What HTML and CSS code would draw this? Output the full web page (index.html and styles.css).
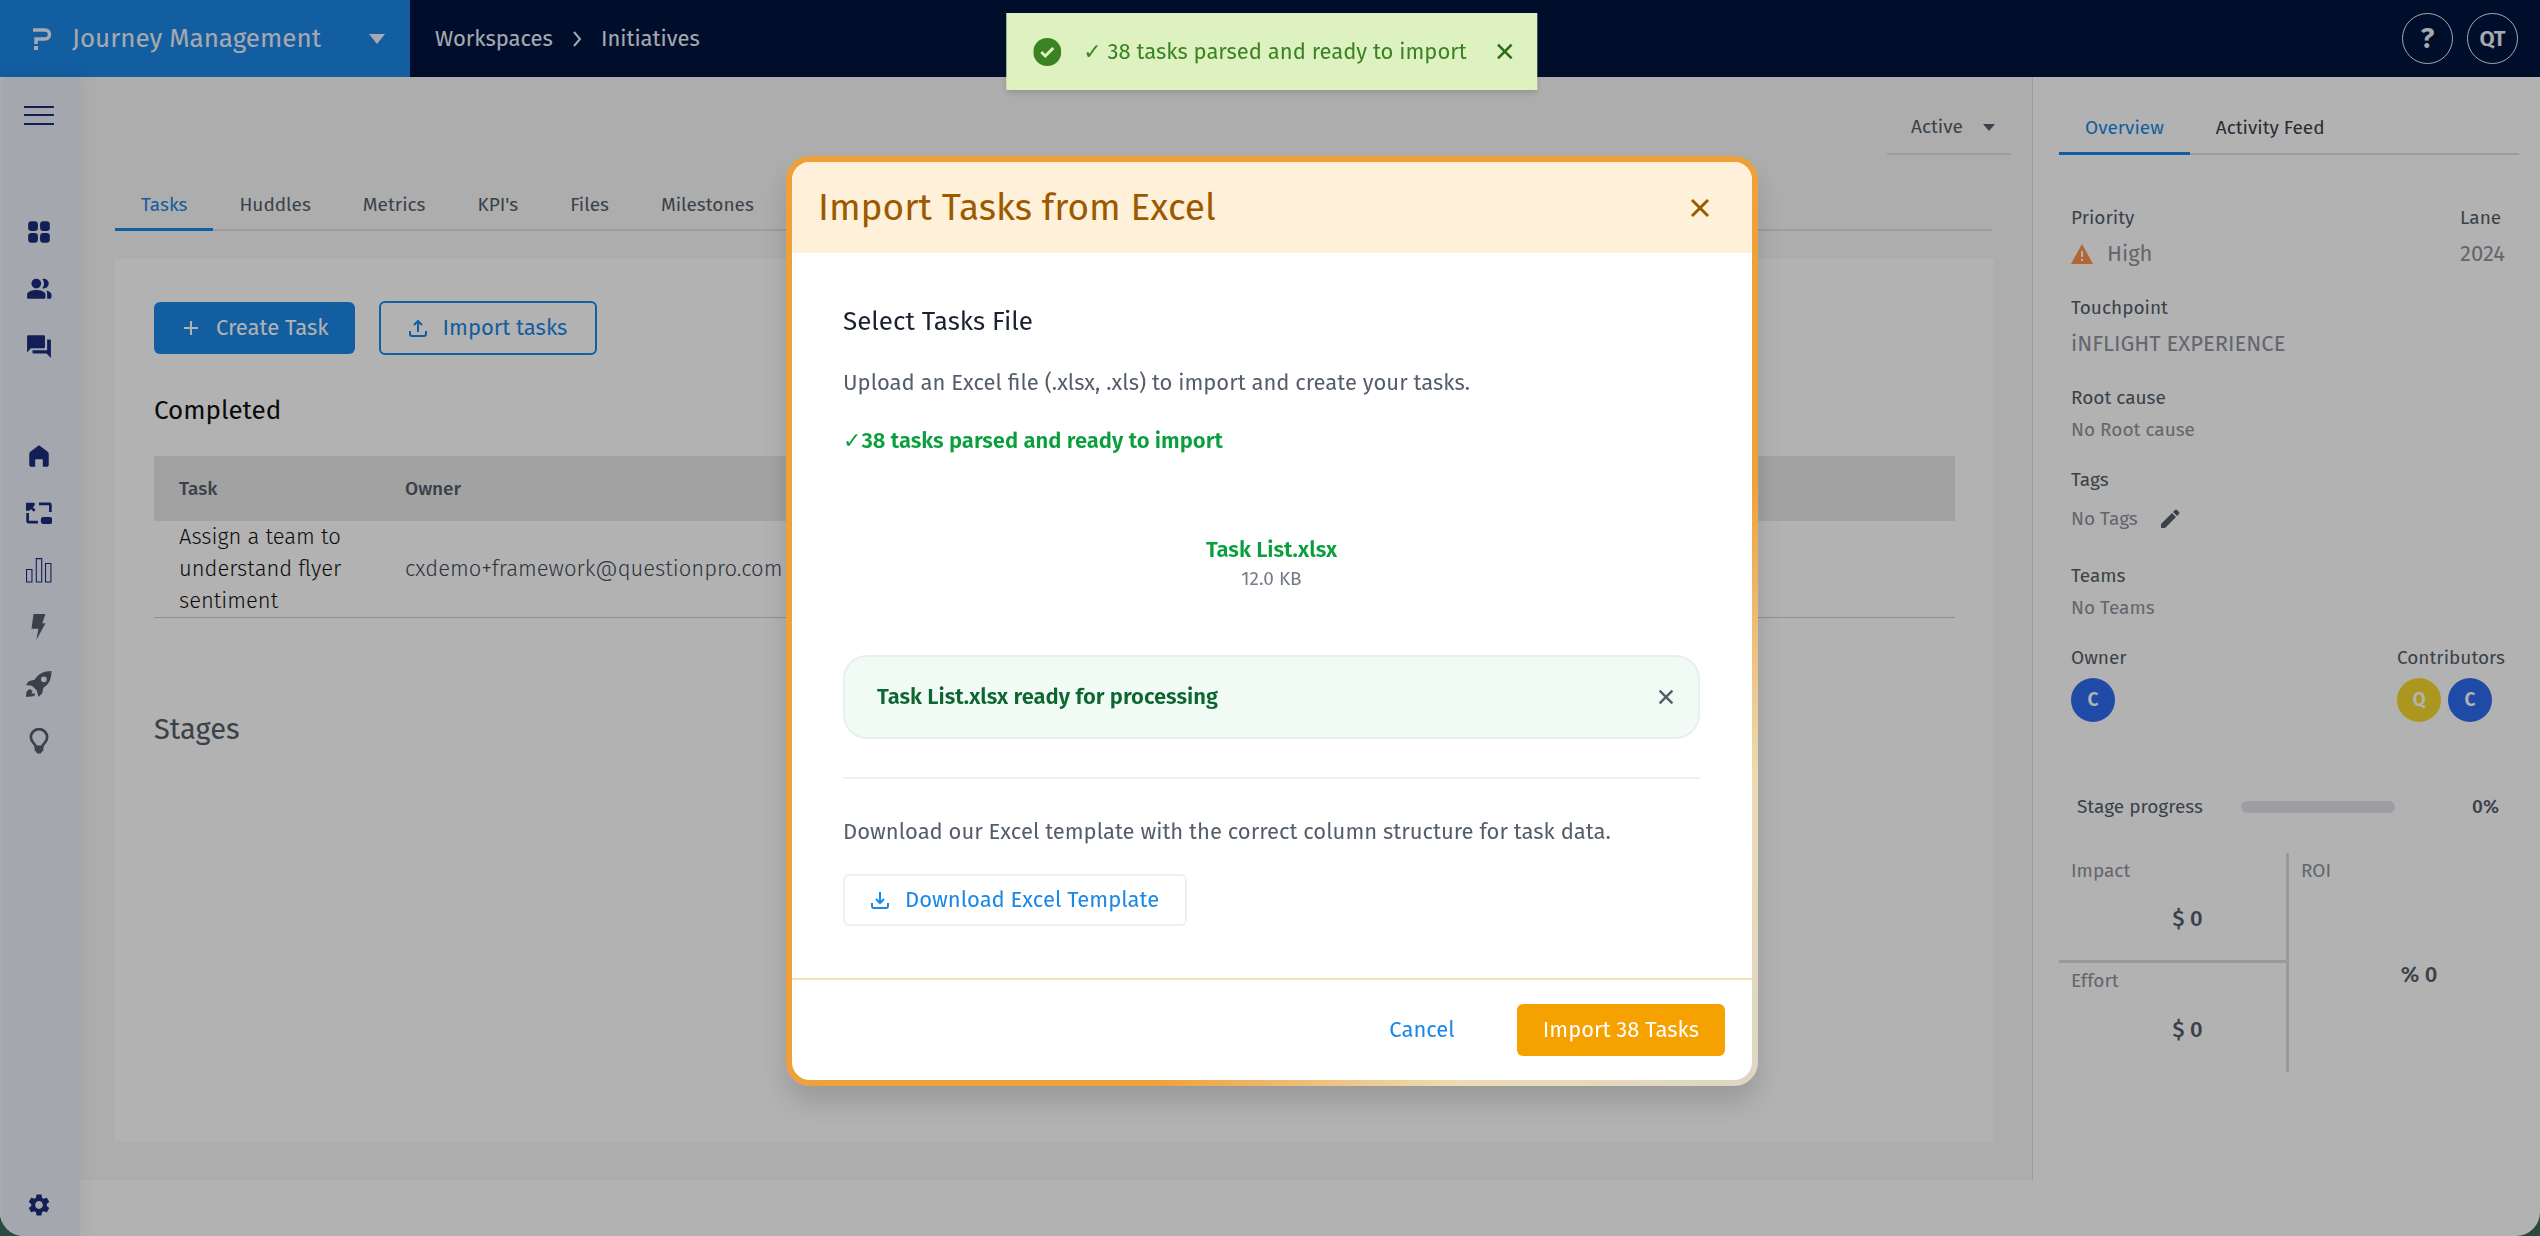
FILE: index.html
```
<!DOCTYPE html>
<html lang="en">
<head>
    <meta charset="UTF-8">
    <title>Journey Management - Initiatives</title>
    <link rel="stylesheet" href="styles.css">
</head>
<body>
    <div class="app">
        <header class="topbar">
            <button class="product-switch">
                <svg class="logo" viewBox="0 0 20 22">
                    <path d="M1 2h12a4.200 4.200 0 0 1 0 9H4v5" fill="none" stroke="currentColor" stroke-width="3.500"/>
                    <rect x="2" y="18" width="4" height="4" fill="currentColor"/>
                </svg>
                <span>Journey Management</span>
                <svg class="caret" viewBox="0 0 16 10"><path d="M0 0h16L8 10z" fill="currentColor"/></svg>
            </button>
            <nav class="crumbs">
                <a href="#">Workspaces</a>
                <svg viewBox="0 0 10 16"><path d="M2 1l6 7-6 7" fill="none" stroke="currentColor" stroke-width="2"/></svg>
                <a href="#">Initiatives</a>
            </nav>
            <div class="user-actions">
                <button class="round-btn help">?</button>
                <button class="round-btn">QT</button>
            </div>
        </header>

        <div class="layout">
            <nav class="sidebar">
                <button class="menu-toggle" aria-label="Menu">
                    <svg class="burger" viewBox="0 0 30 22"><path d="M0 2h30M0 10h30M0 19h30" stroke="currentColor" stroke-width="2"/></svg>
                </button>
                <a href="#" aria-label="Dashboard">
                    <svg viewBox="0 0 24 24" fill="currentColor"><rect x="2" y="2" width="9" height="9" rx="3"/><rect x="13" y="2" width="9" height="9" rx="3"/><rect x="2" y="13" width="9" height="9" rx="3"/><rect x="13" y="13" width="9" height="9" rx="3"/></svg>
                </a>
                <a href="#" aria-label="People">
                    <svg viewBox="0 0 24 24" fill="currentColor"><circle cx="9.500" cy="7" r="4.500"/><path d="M9.500 13C6.500 13 1 14.200 1 17v2.500c0 .8.700 1.500 1.500 1.500h14c.8 0 1.500-.7 1.500-1.500V17c0-2.800-5.500-4-8.500-4z"/><path d="M15 2.700c.5-.2 1-.2 1.500-.2a4.500 4.500 0 0 1 0 9c-.5 0-1-.1-1.500-.2C16.200 10 16.600 8.600 16.600 7S16.200 4 15 2.700zM18.500 13.300c2.500.5 5 1.700 5 3.700v2.500c0 .8-.7 1.500-1.500 1.500h-2.500V17c0-1.500-.1-2.700-1-3.700z"/></svg>
                </a>
                <a href="#" aria-label="Conversations">
                    <svg viewBox="0 0 24 24" fill="currentColor"><path d="M21 6h-1.500v10H6v2c0 .55.45 1 1 1h12l4 4V7c0-.55-.45-1-1-1zM17.500 13V3c0-.55-.45-1-1-1H2c-.55 0-1 .45-1 1v15l3.500-4h12c.55 0 1-.45 1-1z"/></svg>
                </a>
                <a href="#" class="group-start" aria-label="Home">
                    <svg viewBox="0 0 24 24" fill="currentColor"><path d="M12 2l7.500 5.500c1 .8 1.500 1.500 1.500 3V20c0 1-.8 2-2 2h-3.500v-7h-7v7H5c-1.200 0-2-1-2-2v-9.500c0-1.500.5-2.200 1.500-3z"/></svg>
                </a>
                <a href="#" aria-label="Canvas">
                    <svg viewBox="0 0 24 24" fill="none" stroke="currentColor" stroke-width="2.500"><path d="M12 3.500h9.500a1 1 0 0 1 1 1V11M1.500 12v7.500a1 1 0 0 0 1 1H11M8 10L3 5"/><path d="M0 2.500h8v2.500L3 10H0z" fill="currentColor" stroke="none"/><rect x="15" y="17" width="8" height="4" rx="1" fill="currentColor"/></svg>
                </a>
                <a href="#" aria-label="Reports">
                    <svg viewBox="0 0 24 24" fill="none" stroke="currentColor"><path d="M.5 11.500h5V23h-5zM9.500 1.500h5V23h-5zM18 6h5v17h-5z"/></svg>
                </a>
                <a href="#" class="muted" aria-label="Automation">
                    <svg viewBox="0 0 24 24" fill="currentColor"><path d="M7 0h11l-3 8.500h3L9.500 24l2-10.500H5z"/></svg>
                </a>
                <a href="#" class="muted" aria-label="Launch">
                    <svg viewBox="0 0 24 24" fill="currentColor" fill-rule="evenodd"><path d="M23.500 0C16 0 11 3 8 8L2.500 9.500 0 13l5.500.5 4.500 4.500 1.500 6 3.500-3.500 1-5C21 12.500 23.500 8 23.500 0zM16.500 5a2.700 2.700 0 1 1 0 5.400 2.700 2.700 0 0 1 0-5.400zM3.500 16.500l2.500 2-1 2.500 2.500-.5 1 1.500c-1 2-4.500 1.500-8.500 2 .2-3.500 0-6 3.500-7.500z"/></svg>
                </a>
                <a href="#" class="muted" aria-label="Ideas">
                    <svg viewBox="0 0 24 24" fill="none" stroke="currentColor" stroke-width="2.500"><path d="M9 17.500c0-3-4.500-4-4.500-9a7.500 7.500 0 0 1 15 0c0 5-4.500 6-4.500 9z"/><path d="M8 18h8v2.500l-2.500 3h-3L8 20.500z" fill="currentColor" stroke="none"/></svg>
                </a>
                <a href="#" class="settings" aria-label="Settings">
                    <svg viewBox="0 0 24 24" fill="currentColor"><path d="M19.140 12.940c.04-.3.060-.61.060-.94 0-.32-.02-.64-.07-.94l2.030-1.580c.18-.14.230-.41.120-.61l-1.920-3.320c-.12-.22-.37-.29-.59-.22l-2.390.96c-.5-.38-1.030-.7-1.620-.94L14.400 2.810c-.04-.24-.24-.41-.48-.41h-3.840c-.24 0-.43.170-.47.410L9.250 5.350C8.660 5.590 8.120 5.920 7.630 6.290L5.240 5.330c-.22-.08-.47 0-.59.220L2.740 8.870c-.12.210-.08.470.120.610l2.030 1.580C4.840 11.360 4.800 11.690 4.800 12s.02.640.070.940l-2.030 1.580c-.18.140-.23.410-.12.610l1.920 3.320c.12.220.37.290.59.220l2.390-.96c.5.380 1.030.7 1.620.94l.36 2.540c.05.240.240.410.480.410h3.840c.24 0 .44-.17.470-.41l.36-2.540c.59-.24 1.130-.56 1.620-.94l2.390.96c.22.080.470 0 .59-.22l1.920-3.320c.12-.22.070-.47-.12-.61zM12 15.600c-1.980 0-3.600-1.620-3.600-3.600s1.620-3.600 3.600-3.600 3.600 1.620 3.600 3.600-1.620 3.600-3.600 3.600z"/></svg>
                </a>
            </nav>

            <main class="content">
                <div class="toolbar">
                    <div class="status-select">
                        <select aria-label="Status">
                            <option>Active</option>
                        </select>
                        <svg viewBox="0 0 12 7"><path d="M0 0h12L6 7z" fill="currentColor"/></svg>
                    </div>
                </div>

                <nav class="tabs">
                    <a href="#" class="tab active">Tasks</a>
                    <a href="#" class="tab">Huddles</a>
                    <a href="#" class="tab">Metrics</a>
                    <a href="#" class="tab">KPI's</a>
                    <a href="#" class="tab">Files</a>
                    <a href="#" class="tab">Milestones</a>
                </nav>

                <section class="card">
                    <div class="card-actions">
                        <button class="btn btn-primary">
                            <svg viewBox="0 0 18 18"><path d="M9 2v14M2 9h14" stroke="currentColor" stroke-width="2"/></svg>
                            Create Task
                        </button>
                        <button class="btn btn-outline">
                            <svg viewBox="0 0 18 18" fill="none" stroke="currentColor" stroke-width="2"><path d="M9 13V3M5 6l4-4 4 4M1 12v3q0 2 2 2h12q2 0 2-2v-3"/></svg>
                            Import tasks
                        </button>
                    </div>
                    <h2>Completed</h2>
                    <table>
                        <thead>
                            <tr><th class="col-task">Task</th><th>Owner</th></tr>
                        </thead>
                        <tbody>
                            <tr><td>Assign a team to understand flyer sentiment</td><td class="owner">cxdemo+framework@questionpro.com</td></tr>
                        </tbody>
                    </table>
                    <h2 class="stages">Stages</h2>
                </section>
            </main>

            <aside class="panel">
                <nav class="tabs">
                    <a href="#" class="tab active">Overview</a>
                    <a href="#" class="tab">Activity Feed</a>
                </nav>
                <div class="fields">
                    <div class="field-row">
                        <div class="field">
                            <span class="label">Priority</span>
                            <span class="value large">
                                <svg class="warn" viewBox="0 0 22 20"><path d="M11 0l11 20H0z" fill="#ff914d"/><path d="M11 7v6M11 15v2" stroke="#fff" stroke-width="2"/></svg>
                                High
                            </span>
                        </div>
                        <div class="field">
                            <span class="label">Lane</span>
                            <span class="value large">2024</span>
                        </div>
                    </div>
                    <div class="field">
                        <span class="label">Touchpoint</span>
                        <span class="value large">iNFLIGHT EXPERIENCE</span>
                    </div>
                    <div class="field">
                        <span class="label">Root cause</span>
                        <span class="value">No Root cause</span>
                    </div>
                    <div class="field">
                        <span class="label">Tags</span>
                        <span class="value tags">
                            No Tags
                            <button class="icon-btn" aria-label="Edit tags">
                                <svg viewBox="0 0 20 20"><path d="M1 19v-4L12 4l4 4L5 19zM13 3l2-2q1-1 2 0l2 2q1 1 0 2l-2 2z" fill="currentColor"/></svg>
                            </button>
                        </span>
                    </div>
                    <div class="field">
                        <span class="label">Teams</span>
                        <span class="value">No Teams</span>
                    </div>
                    <div class="field-row">
                        <div class="field">
                            <span class="label">Owner</span>
                            <span class="avatars"><span class="avatar blue">C</span></span>
                        </div>
                        <div class="field">
                            <span class="label">Contributors</span>
                            <span class="avatars"><span class="avatar yellow">Q</span><span class="avatar blue">C</span></span>
                        </div>
                    </div>
                </div>
                <div class="stage-progress">
                    <label for="progress">Stage progress</label>
                    <progress id="progress" value="0" max="100"></progress>
                    <span>0%</span>
                </div>
                <div class="metrics">
                    <div class="metrics-left">
                        <div class="metric">
                            <span class="metric-label">Impact</span>
                            <span class="metric-value">$ 0</span>
                        </div>
                        <div class="metric">
                            <span class="metric-label">Effort</span>
                            <span class="metric-value">$ 0</span>
                        </div>
                    </div>
                    <div class="metric roi">
                        <span class="metric-label">ROI</span>
                        <span class="metric-value">% 0</span>
                    </div>
                </div>
            </aside>
        </div>
    </div>

    <div class="overlay">
        <div class="modal" role="dialog" aria-labelledby="modal-title">
            <div class="modal-header">
                <h1 id="modal-title">Import Tasks from Excel</h1>
                <button class="icon-btn" aria-label="Close">
                    <svg viewBox="0 0 20 20"><path d="M2 2l16 16M18 2L2 18" stroke="currentColor" stroke-width="3"/></svg>
                </button>
            </div>
            <div class="modal-body">
                <h3>Select Tasks File</h3>
                <p>Upload an Excel file (.xlsx, .xls) to import and create your tasks.</p>
                <p class="parsed">✓38 tasks parsed and ready to import</p>
                <div class="file">
                    <div class="file-name">Task List.xlsx</div>
                    <div class="file-size">12.0 KB</div>
                </div>
                <div class="file-ready">
                    <span>Task List.xlsx ready for processing</span>
                    <button class="icon-btn" aria-label="Remove file">
                        <svg viewBox="0 0 20 20"><path d="M2 2l16 16M18 2L2 18" stroke="currentColor" stroke-width="3"/></svg>
                    </button>
                </div>
                <div class="template">
                    <p>Download our Excel template with the correct column structure for task data.</p>
                    <button class="btn btn-template">
                        <svg viewBox="0 0 18 18" fill="none" stroke="currentColor" stroke-width="2"><path d="M9 1v10M5 8l4 4 4-4M1 12v3q0 2 2 2h12q2 0 2-2v-3"/></svg>
                        Download Excel Template
                    </button>
                </div>
            </div>
            <div class="modal-footer">
                <button class="btn btn-text">Cancel</button>
                <button class="btn btn-import">Import 38 Tasks</button>
            </div>
        </div>
    </div>

    <div class="toast" role="status">
        <svg class="toast-icon" viewBox="0 0 28 28"><circle cx="14" cy="14" r="14" fill="currentColor"/><path d="M8 14l4 4 8-8" fill="none" stroke="#ddf2c0" stroke-width="3"/></svg>
        <span>✓ 38 tasks parsed and ready to import</span>
        <button class="icon-btn" aria-label="Dismiss">
            <svg viewBox="0 0 20 20"><path d="M2 2l16 16M18 2L2 18" stroke="currentColor" stroke-width="3"/></svg>
        </button>
    </div>
</body>
</html>
```

FILE: styles.css
```
* {
    box-sizing: border-box;
}
body {
    margin: 0;
    background-color: #3d6b5c;
    font-family: "Fira Sans", "Noto Sans", "DejaVu Sans", sans-serif;
    font-size: 22px;
    line-height: 32px;
    color: #545e6b;
}
h1, h2, h3, p {
    margin: 0;
    font-weight: 400;
}
a {
    color: inherit;
    text-decoration: none;
}
button, select {
    font: inherit;
    color: inherit;
    background: none;
    border: none;
    padding: 0;
    cursor: pointer;
}
svg {
    display: block;
    flex-shrink: 0;
}
.app {
    display: flex;
    flex-direction: column;
    min-height: 100vh;
    background-color: white;
    border-radius: 0 0 24px 24px;
    overflow: hidden;
}

/* top bar */
.topbar {
    display: flex;
    align-items: center;
    height: 77px;
    background-color: #001540;
    color: #eef2fb;
}
.product-switch {
    display: flex;
    align-items: center;
    width: 410px;
    height: 77px;
    padding: 0 25px 0 32px;
    background-color: #1b87e6;
    font-size: 26px;
}
.logo {
    width: 20px;
    height: 22px;
    margin-right: 20px;
}
.caret {
    width: 16px;
    height: 10px;
    margin-left: auto;
}
.crumbs {
    display: flex;
    align-items: center;
    gap: 19px;
    padding-left: 25px;
}
.crumbs svg {
    width: 10px;
    height: 16px;
}
.user-actions {
    display: flex;
    gap: 14px;
    margin-left: auto;
    padding-right: 22px;
}
.round-btn {
    width: 51px;
    height: 51px;
    border: 1px solid #eef2fb;
    border-radius: 50%;
    font-weight: 600;
}
.help {
    font-size: 29px;
}

.layout {
    display: flex;
    flex: 1;
}

/* sidebar */
.sidebar {
    display: flex;
    flex-direction: column;
    width: 80px;
    padding: 10px 0 3px;
    background-color: #ecf0fb;
    border-left: 2px solid #f6f7fb;
    box-shadow: 0 0 16px rgba(60, 70, 110, 0.1);
    color: #1b2c7c;
    z-index: 1;
}
.sidebar a, .menu-toggle {
    display: flex;
    align-items: center;
    justify-content: center;
    height: 57px;
    padding-right: 4px;
}
.sidebar svg {
    width: 26px;
    height: 26px;
}
.sidebar .burger {
    width: 30px;
    height: 22px;
}
.menu-toggle {
    margin-bottom: 59px;
}
.sidebar .group-start {
    margin-top: 53px;
}
.sidebar .muted {
    color: #545e6b;
}
.sidebar .settings {
    margin-top: auto;
}

/* tabs */
.tabs {
    display: flex;
    border-bottom: 2px solid #e0e0e0;
    font-size: 19px;
}
.tab {
    padding: 11px 26px 7px;
    margin-bottom: -2px;
    border-bottom: 3px solid transparent;
}
.tab.active {
    color: #1b87e6;
    border-bottom-color: #1b87e6;
}

/* main column */
.content {
    display: flex;
    flex-direction: column;
    flex: 1;
    margin-bottom: 56px;
    padding: 22px 0 38px;
    background-color: #f8f8f8;
}
.toolbar {
    display: flex;
    justify-content: flex-end;
    padding-right: 21px;
    margin-bottom: 23px;
}
.status-select {
    display: flex;
    align-items: center;
    height: 56px;
    padding: 2px 16px 0 24px;
    border-bottom: 2px solid #e0e0e0;
    font-size: 19px;
}
.status-select select {
    appearance: none;
    padding-right: 20px;
}
.status-select svg {
    width: 12px;
    height: 7px;
}
.content .tabs {
    margin: 0 40px 28px 35px;
}
.card {
    flex: 1;
    margin: 0 38px 0 35px;
    padding: 42px 39px;
    background-color: white;
}
.card-actions {
    display: flex;
    align-items: center;
    gap: 24px;
    margin-bottom: 39px;
}
.btn {
    display: inline-flex;
    align-items: center;
    justify-content: center;
    gap: 16px;
    height: 52px;
    padding: 0 26px;
    border-radius: 6px;
}
.btn svg {
    width: 18px;
    height: 18px;
}
.btn-primary {
    padding: 0 26px 0 28px;
    background-color: #1b87e6;
    color: white;
}
.btn-outline {
    height: 54px;
    padding: 0 28px;
    border: 2px solid #1b87e6;
    color: #1b87e6;
}
h2 {
    font-size: 26px;
    line-height: 34px;
    color: #111;
}
table {
    width: 100%;
    margin-top: 28px;
    border-collapse: collapse;
    table-layout: fixed;
}
th {
    height: 65px;
    padding: 0 0 0 25px;
    background-color: #e9e9e9;
    font-size: 19px;
    font-weight: 500;
    text-align: left;
}
.col-task {
    width: 226px;
}
td {
    padding: 0 20px 0 25px;
    border-bottom: 1px solid #ccced2;
    color: #111;
    font-weight: 300;
}
.owner {
    color: #444c58;
}
.stages {
    margin-top: 95px;
    font-size: 29px;
    color: #545e6b;
}

/* right panel */
.panel {
    width: 508px;
    margin-bottom: 56px;
    padding: 22px 21px 0 26px;
    border-left: 1px solid #e0e0e0;
    font-size: 19px;
}
.panel .tab {
    padding: 13px 26px 8px;
    color: #3a3f4a;
}
.panel .tab.active {
    color: #1b87e6;
}
.fields {
    display: flex;
    flex-direction: column;
    gap: 26px;
    padding: 51px 14px 0 12px;
    line-height: 24px;
}
.field-row {
    display: flex;
    justify-content: space-between;
}
.field {
    display: flex;
    flex-direction: column;
    gap: 8px;
}
.value {
    display: flex;
    align-items: center;
    color: #8e929b;
}
.value.large {
    font-size: 22px;
    line-height: 32px;
}
.warn {
    width: 22px;
    height: 20px;
    margin-right: 14px;
}
.value.tags {
    gap: 22px;
    height: 38px;
}
.icon-btn svg {
    width: 20px;
    height: 20px;
}
.value .icon-btn {
    color: #545e6b;
}
.avatars {
    display: flex;
    gap: 7px;
}
.avatar {
    width: 44px;
    height: 44px;
    border-radius: 50%;
    color: white;
    font-weight: 600;
    line-height: 44px;
    text-align: center;
}
.blue {
    background-color: #2d6cf0;
}
.yellow {
    background-color: #f5d92e;
}
.stage-progress {
    display: flex;
    align-items: center;
    margin-top: 73px;
    padding: 0 20px 0 18px;
    line-height: 24px;
}
.stage-progress span {
    margin-left: auto;
    font-weight: 500;
}
progress {
    appearance: none;
    width: 154px;
    height: 12px;
    margin-left: 38px;
    border: none;
}
progress::-webkit-progress-bar {
    background-color: #e2e2e8;
    border-radius: 6px;
}
.metrics {
    display: grid;
    grid-template-columns: 1fr 1fr;
    margin-top: 34px;
    line-height: 24px;
}
.metrics-left {
    border-right: 3px solid #dcdcdc;
}
.metric {
    display: flex;
    flex-direction: column;
    height: 107px;
    padding: 6px 12px;
}
.metric + .metric {
    height: 112px;
    border-top: 3px solid #dcdcdc;
}
.metric-label {
    color: #8e929b;
}
.metric-value {
    display: flex;
    flex: 1;
    align-items: center;
    justify-content: center;
    padding-left: 30px;
    font-size: 22px;
    font-weight: 500;
}
.metrics .roi {
    height: auto;
}

/* import dialog */
.overlay {
    position: fixed;
    inset: 0;
    display: flex;
    align-items: center;
    justify-content: center;
    padding: 6px 0 0 4px;
    background-color: rgba(0, 0, 0, 0.3);
    z-index: 10;
}
.modal {
    width: 972px;
    max-width: 100%;
    border: 6px solid transparent;
    border-radius: 24px;
    background: linear-gradient(white, white) padding-box, linear-gradient(135deg, #efa03a 68%, #ecdcb4 84%, #ddd6c4) border-box;
    box-shadow: 0 16px 28px rgba(0, 0, 0, 0.15);
}
.modal-header {
    display: flex;
    align-items: center;
    justify-content: space-between;
    height: 91px;
    padding: 0 42px 0 26px;
    background-color: #fff0d9;
    border-radius: 18px 18px 0 0;
    color: #9c5a00;
}
h1 {
    font-size: 37px;
    line-height: 48px;
}
.modal-body {
    padding: 53px 52px 52px 51px;
}
h3 {
    margin-bottom: 29px;
    font-size: 26px;
    color: #1b2130;
}
.parsed {
    margin-top: 26px;
    color: #0a9f3c;
    font-weight: 600;
}
.file {
    margin: 77px 0 63px;
    text-align: center;
}
.file-name {
    color: #0a9f3c;
    font-weight: 600;
}
.file-size {
    font-size: 19px;
    line-height: 26px;
    color: #737a87;
}
.file-ready {
    display: flex;
    align-items: center;
    justify-content: space-between;
    height: 84px;
    padding: 0 24px 0 32px;
    background-color: #f1fbf6;
    border: 2px solid #e8f0ec;
    border-radius: 24px;
    color: #0d6630;
    font-weight: 600;
}
.file-ready .icon-btn {
    color: #545e6b;
}
.file-ready .icon-btn svg {
    width: 16px;
    height: 16px;
}
.template {
    margin-top: 38px;
    padding-top: 37px;
    border-top: 2px solid #eeeff1;
}
.btn-template {
    margin-top: 26px;
    border: 2px solid #eeeff1;
    color: #1b87e6;
}
.modal-footer {
    display: flex;
    align-items: center;
    justify-content: flex-end;
    gap: 36px;
    height: 102px;
    padding-right: 27px;
    border-top: 2px solid #f5e0b5;
}
.btn-text {
    color: #1b87e6;
}
.btn-import {
    background-color: #f5a100;
    color: white;
}

/* toast */
.toast {
    position: fixed;
    top: 13px;
    left: 50%;
    display: flex;
    align-items: center;
    height: 77px;
    margin-left: 2px;
    padding: 0 24px 0 27px;
    transform: translateX(-50%);
    background-color: #ddf2c0;
    box-shadow: 0 3px 6px rgba(0, 0, 0, 0.15);
    color: #3a8222;
    white-space: nowrap;
    z-index: 20;
}
.toast-icon {
    width: 28px;
    height: 28px;
    margin-right: 22px;
}
.toast .icon-btn {
    margin-left: 30px;
    color: #2c6b17;
}
.toast .icon-btn svg {
    width: 17px;
    height: 17px;
}
```
